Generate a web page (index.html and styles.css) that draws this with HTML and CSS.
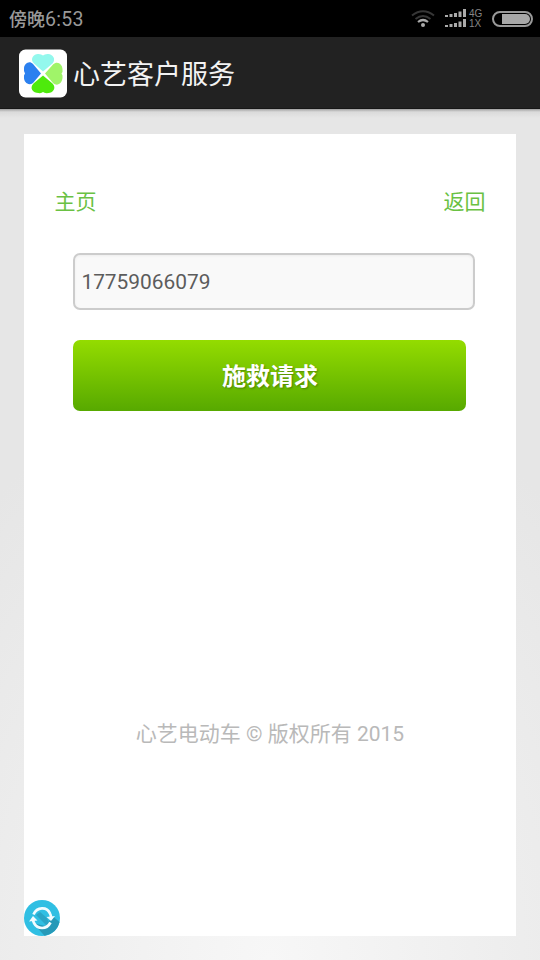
FILE: index.html
```html
<!DOCTYPE html>
<html lang="zh-CN">
<head>
<meta charset="utf-8">
<title>心艺客户服务</title>
<link rel="stylesheet" href="styles.css">
</head>
<body>
<div class="status-bar">
  <span class="clock">傍晚<span class="time">6:53</span></span>
  <svg class="wifi" width="24" height="20" viewBox="0 0 24 20" fill="none" stroke-linecap="butt">
    <path d="M1 6.500Q12-2 23 6.500M4.500 10Q12 4 19.500 10" stroke="#373737" stroke-width="2"/>
    <path d="M7 13Q12 9 17 13" stroke="#aaa" stroke-width="2.200"/>
    <circle cx="12" cy="16" r="2" fill="#aaa"/>
  </svg>
  <svg class="signal" width="22" height="20" viewBox="0 0 22 20" fill="#aaa">
    <path id="bars" d="M0 6h3v2H0zM4.500 5h3v3h-3zM9 4h3v4H9zM13.500 2.500h3V8h-3zM18 0h3v8h-3z"/>
    <use href="#bars" y="10"/>
  </svg>
  <span class="network"><span>4G</span><span>1X</span></span>
  <span class="battery"><span class="charge"></span></span>
</div>
<header class="app-bar">
  <svg class="logo" width="49" height="49" viewBox="0 0 49 49">
    <rect x="1" y=".5" width="48" height="48" rx="6.500" fill="#fff"/>
    <g transform="translate(.5 0)">
    <path fill="#93f8ed" d="M24.500 22.500L15.500 14.500C10.500 9.500 16 4.500 20 5Q23 5 24.500 6.500Q26 5 29 5C34 4.500 38 10 34 14.500Z"/>
    <path fill="#2b80ef" d="M22.500 24.500L14.500 34C9.500 37.500 5.500 32.500 5.500 29Q5 26 6.500 24.500Q5 23 5.500 19C6 15 10.500 11 14.500 15Z"/>
    <path fill="#a0f469" d="M26.500 24.500L34.500 15.500C39 11 44 15.500 44 20Q44.500 23 43 24.500Q44.500 26 44 29C43.500 34 39 38 34.500 34Z"/>
    <path fill="#4eea0c" d="M24.500 26.500L34 34.500C38.500 39 34 44 30 44Q26 44.500 24.500 43Q23 44.500 20 44C14.500 44 10.500 39 15 34.500Z"/>
    </g>
  </svg>
  <h1 class="app-title">心艺客户服务</h1>
</header>
<main class="page">
  <section class="panel">
    <nav class="links"><a class="link" href="#">主页</a><a class="link" href="#">返回</a></nav>
    <form class="request-form">
      <input class="phone" type="text" value="17759066079">
      <button class="submit" type="button">施救请求</button>
    </form>
    <footer class="copyright">心艺电动车 © 版权所有 2015</footer>
    <button class="refresh" type="button" title="刷新">
      <svg width="36" height="36" viewBox="0 0 36 36">
        <circle cx="18" cy="18" r="18" fill="#30bfe3"/>
        <path d="M9 23L20.500 35.800Q33 33.500 35.500 22L29 16.500L21 26Z" fill="#2699b8"/>
        <path d="M12 15L22 25L25 23L23 18L16 12Z" fill="#2aa5c6"/>
        <g fill="none" stroke="#f2fcff" stroke-width="2.700"><path d="M9.500 14.500C13 6.500 23 6.500 26 13.500Q27 15.500 27 17"/><path d="M26.500 22.500C22.500 30 13.500 29.500 10 23Q9 21 9 19.500"/></g>
        <path d="M22.500 17L31 16L27 21ZM5 21.500L9 16L13.500 20.500Z" fill="#f2fcff"/>
      </svg>
    </button>
  </section>
</main>
</body>
</html>
```
FILE: styles.css
```css
* { box-sizing: border-box; }
body {
  margin: 0;
  height: 960px;
  display: flex;
  flex-direction: column;
  overflow: hidden;
  font-family: Roboto, "Noto Sans CJK SC", sans-serif;
}
.status-bar {
  height: 37px;
  flex: none;
  display: flex;
  align-items: center;
  padding: 1px 7px 0 9px;
  background: #000;
  color: #999;
}
.clock { padding-top: 1px; font-size: 18px; line-height: 36px; margin-right: auto; font-weight: 500; }
.time { font-size: 19.500px; font-weight: 400; letter-spacing: .3px; }
.wifi { margin-right: 10px; }
.signal { margin-right: 2px; }
.network {
  width: 16px;
  margin-right: 7px;
  display: flex;
  flex-direction: column;
  font: 10px/10px "Liberation Sans", sans-serif;
  color: #858585;
}
.network span { height: 10px; }
.battery {
  width: 41px;
  height: 16px;
  padding: 1px 1px 1px 8px;
  border: 2px solid #999;
  border-radius: 8px;
}
.charge { display: block; height: 100%; background: #a8a8a8; border-radius: 0 6px 6px 0; }
.app-bar {
  height: 72px;
  flex: none;
  display: flex;
  align-items: center;
  gap: 6px;
  padding-left: 18px;
  background: #222;
  border-bottom: 1px solid #171717;
}
.logo { margin-top: 1px; }
.app-title { margin: 0; padding-top: 4px; font-size: 27px; font-weight: 400; line-height: 40px; color: #f3f3f3; }
.page {
  flex: 1;
  padding: 24.500px 24px 24px;
  background:
    linear-gradient(#0000004d, #0000000d 3px, transparent 9px) top / 100% 9px no-repeat,
    radial-gradient(ellipse 430px 600px at 50% 100%, #f7f7f7, #e6e6e6);
}
.panel {
  position: relative;
  height: 802.500px;
  padding: 53.500px 30.500px 0;
  background: #fff;
}
.links { display: flex; justify-content: space-between; line-height: 30px; }
.link { font-size: 21px; color: #6ac143; text-decoration: none; }
.request-form {
  display: flex;
  flex-direction: column;
  gap: 30px;
  padding: 36px 10px 0 18.900px;
}
.phone {
  width: 402px;
  height: 57px;
  padding: 0 6px;
  border: 2px solid #ccc;
  border-radius: 7px;
  background: #f9f9f9;
  box-shadow: inset 0 1px 3px #0000000d;
  font: 20.900px Roboto, sans-serif;
  color: #5c5c5c;
}
.submit {
  width: 393px;
  height: 71px;
  padding: 0 0 3px;
  border: 0;
  border-radius: 7px;
  background: linear-gradient(#94dc00, #57a900);
  font: 700 24px "Noto Sans CJK SC", sans-serif;
  color: #fff;
  text-shadow: 1px 1px 2px #0000004d;
}
.copyright { margin-top: 308px; text-align: center; font-size: 21px; line-height: 30px; color: #b9b9b9; }
.refresh { position: absolute; left: 0; bottom: 0; width: 36px; height: 36px; padding: 0; border: 0; background: none; }
.refresh svg { display: block; }
```
